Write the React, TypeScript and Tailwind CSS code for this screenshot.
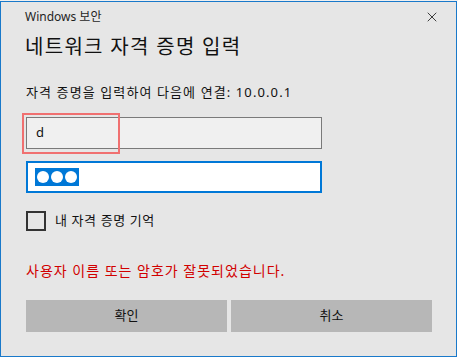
// Windows Security credential prompt (Korean)
import { X } from "lucide-react";

const font = { fontFamily: '"Noto Sans", "Noto Sans CJK KR", sans-serif' };

export default function App() {
  return (
    <div className="w-[458px] h-[358px] bg-white" style={font}>
      <div className="h-[1px] bg-[#f0f0f0]" />
      <div className="relative w-[457px] h-[356px] border border-[#1979ca] bg-[#e6e6e6] flex flex-col">
        {/* title bar */}
        <div className="h-[30px] flex items-center justify-between pl-[24px] pr-[16px]">
          <span className="text-[12px] text-[#1f1f1f]">Windows 보안</span>
          <X className="size-[16px] text-[#222]" strokeWidth={1.3} />
        </div>

        <h1 className="pl-[24px] mt-[1px] text-[20px] leading-[28px] tracking-[1.3px] text-[#111]">
          네트워크 자격 증명 입력
        </h1>

        <p className="pl-[25px] mt-[22px] text-[13px] leading-[18px] tracking-[1.1px] text-[#111]">
          자격 증명을 입력하여 다음에 연결: 10.0.0.1
        </p>

        <div className="pl-[25px] mt-[16px] flex flex-col gap-[12px]">
          <div className="w-[296px] h-[32px] border border-[#7a7a7a] bg-[#f0f0f0] flex items-center pl-[9px] text-[13px] text-[#111]">
            d
          </div>
          <div className="w-[296px] h-[32px] border-2 border-[#0078d7] bg-white flex items-center pl-[7px]">
            <div className="h-[18px] px-[2px] bg-[#0078d7] flex items-center gap-[2px]">
              <span className="size-[12px] rounded-full bg-white" />
              <span className="size-[12px] rounded-full bg-white" />
              <span className="size-[12px] rounded-full bg-white" />
            </div>
          </div>
        </div>

        <label className="pl-[25px] mt-[18px] flex items-center gap-[9px]">
          <span className="size-[20px] border-2 border-[#333] bg-transparent" />
          <span className="text-[13px] tracking-[0.6px] text-[#111]">내 자격 증명 기억</span>
        </label>

        <p className="pl-[25px] mt-[31px] text-[14px] leading-[18px] tracking-[1px] text-[#d10000]">
          사용자 이름 또는 암호가 잘못되었습니다.
        </p>

        <div className="pl-[25px] mt-[20px] flex gap-[4px]">
          <button className="w-[201px] h-[32px] bg-[#b7b7b7] text-[13px] text-[#111]">확인</button>
          <button className="w-[201px] h-[32px] bg-[#b7b7b7] text-[13px] text-[#111]">취소</button>
        </div>

        {/* annotation highlight over the user name field */}
        <div className="absolute left-[21px] top-[111px] w-[98px] h-[41px] border-2 border-[#f07070]" />
      </div>
    </div>
  );
}
